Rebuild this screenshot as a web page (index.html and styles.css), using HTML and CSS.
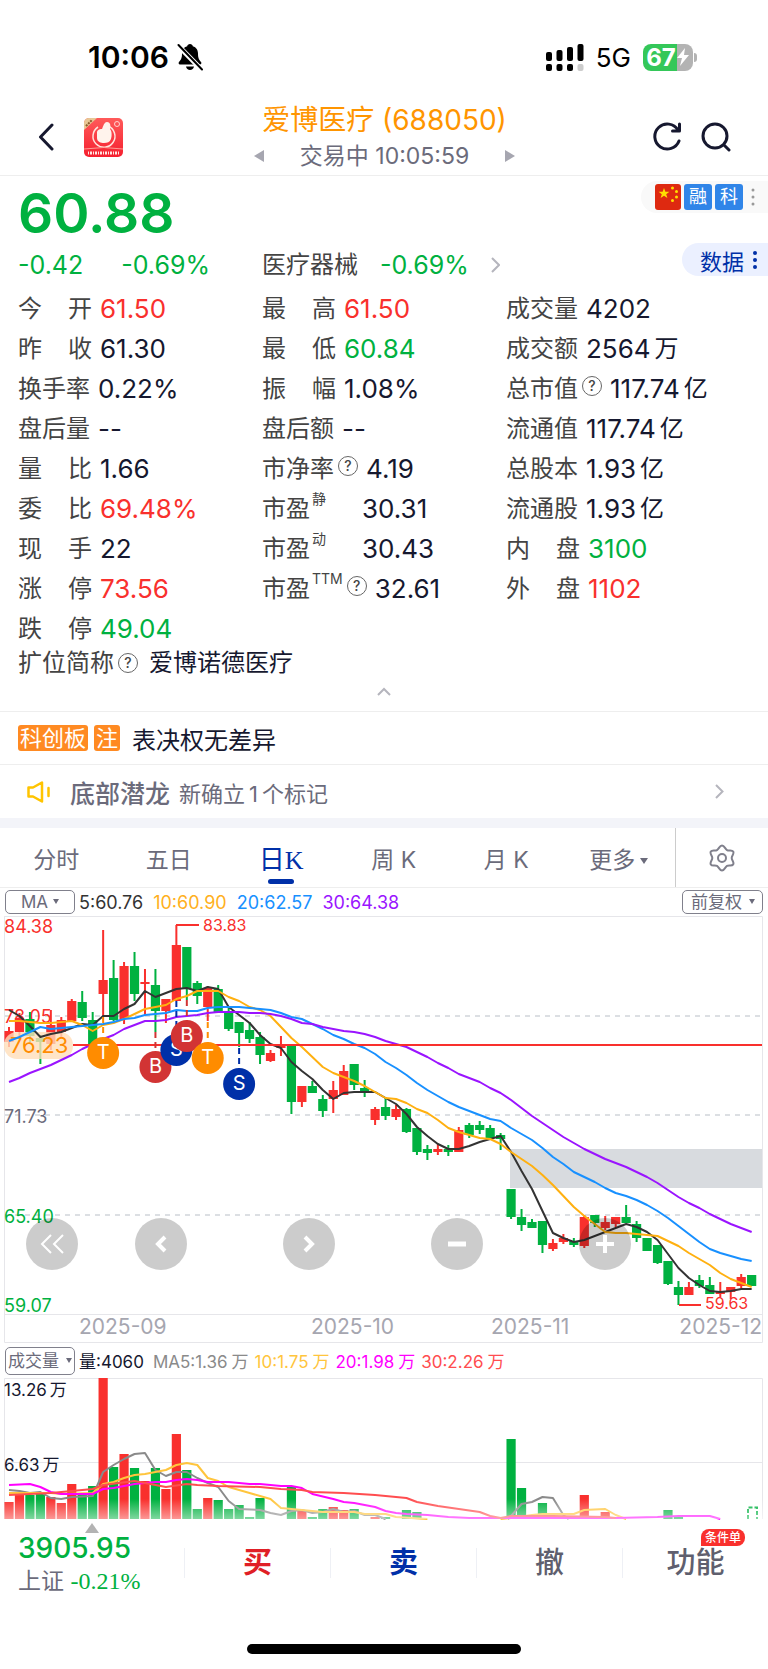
FILE: index.html
```
<!DOCTYPE html>
<html lang="zh-CN">
<head>
  <meta charset="UTF-8">
  <meta name="viewport" content="width=device-width, initial-scale=1.0">
  <title>爱博医疗 (688050)</title>
  <link rel="stylesheet" href="styles.css">
</head>
<body>
  <div class="status-bar">
    <div class="status-left">
      <span class="clock">10:06</span>
      <svg width="26" height="28" viewBox="0 0 26 28">
        <path d="M13 1c1.600 0 2.600 1 2.800 2.200 3.600 1 5.200 4 5.200 7.300 0 5 1.300 6.500 3 8.600.8 1 .4 2.400-1 2.400H3c-1.400 0-1.800-1.400-1-2.400 1.700-2.100 3-3.600 3-8.600 0-3.300 1.600-6.300 5.200-7.300C10.400 2 11.400 1 13 1z"/>
        <path d="M9 23.500h8c-.3 2-2 3.500-4 3.500s-3.700-1.500-4-3.500z"/>
        <path d="M0 1.500L25 27" stroke="#fff" stroke-width="5"/>
        <path d="M1.500 2L25 26.500" stroke="#000" stroke-width="2" stroke-linecap="round"/>
      </svg>
    </div>
    <div class="status-right">
      <svg width="38" height="28" viewBox="0 0 38 28">
        <rect x="0" y="9" width="6" height="9" rx="2"/>
        <rect x="10.500" y="7" width="6" height="11" rx="2"/>
        <rect x="21" y="4" width="6" height="14" rx="2"/>
        <rect x="31.500" y="1" width="6" height="17" rx="2"/>
        <rect x="0" y="21" width="6" height="7" rx="2"/>
        <rect x="10.500" y="21" width="6" height="7" rx="2"/>
        <rect x="21" y="21" width="6" height="7" rx="2"/>
        <rect x="31.500" y="21" width="6" height="7" rx="2" fill="#ccc"/>
      </svg>
      <span class="network">5G</span>
      <div class="battery">
        <span>67</span>
        <svg width="14" height="20" viewBox="0 0 14 20"><path d="M9 1L1 11h5l-2 8 9-11H8z" fill="#fff"/></svg>
      </div>
    </div>
  </div>

  <header class="header">
    <div class="header-side">
      <button type="button" class="icon-btn back-btn" aria-label="返回">
        <svg width="16" height="28" viewBox="0 0 16 28"><path d="M14 2L2.500 14 14 26" fill="none" stroke="#16182f" stroke-width="3" stroke-linecap="round" stroke-linejoin="round"/></svg>
      </button>
      <svg width="39" height="39" viewBox="0 0 39 39">
        <defs>
          <clipPath id="app-clip"><rect width="39" height="39" rx="5"/></clipPath>
          <linearGradient id="app-bg" x1="0" y1="0" x2="0" y2="1"><stop offset="0" stop-color="#ff5a5a"/><stop offset="1" stop-color="#f5202f"/></linearGradient>
        </defs>
        <g clip-path="url(#app-clip)">
          <rect width="39" height="39" fill="url(#app-bg)"/>
          <path d="M0 0h13L0 12z" fill="#e8c795"/>
          <path d="M2 8l6-6" stroke="#8c5a2b" stroke-width="2" stroke-dasharray="2 1"/>
          <path d="M24 8a11 11 0 1 1-10 1" fill="none" stroke="#ffe3dc" stroke-width="1.500"/>
          <path d="M13 15c0-3 2-4 5-4 1-2 2-7 5-7s4 3 3 7c2 2 2 7 1 10s-4 4-7 4-7-1-7-5z" fill="#fff3ec"/>
          <circle cx="33" cy="6" r="2.500" fill="none" stroke="#ffd3cf"/>
          <path d="M0 31q20-3 39 0" fill="none" stroke="#ff9c93"/>
          <path d="M4 35h31" stroke="#ffe6e2" stroke-width="3" stroke-dasharray="1 1 2 1"/>
        </g>
      </svg>
    </div>
    <div class="header-title">
      <h1>爱博医疗 (688050)</h1>
      <div class="header-sub">
        <button type="button" class="icon-btn" aria-label="上一只"><svg width="10" height="12" viewBox="0 0 10 12"><path d="M10 0v12L0 6z" fill="#a6a6b0"/></svg></button>
        <span>交易中 10:05:59</span>
        <button type="button" class="icon-btn" aria-label="下一只"><svg width="10" height="12" viewBox="0 0 10 12"><path d="M0 0v12l10-6z" fill="#a6a6b0"/></svg></button>
      </div>
    </div>
    <div class="header-side header-actions">
      <button type="button" class="icon-btn" aria-label="刷新">
        <svg width="30" height="30" viewBox="0 0 30 30" fill="none" stroke="#16182f" stroke-width="3" stroke-linecap="round" stroke-linejoin="round"><path d="M27 19a12.500 12.500 0 1 1-1-11M27.500 2v7h-7"/></svg>
      </button>
      <button type="button" class="icon-btn" aria-label="搜索">
        <svg width="30" height="30" viewBox="0 0 30 30" fill="none" stroke="#16182f" stroke-width="3" stroke-linecap="round"><circle cx="14" cy="14" r="12"/><path d="M23 23l5 5"/></svg>
      </button>
    </div>
  </header>

  <section class="quote">
    <div class="quote-top">
      <div class="price down">60.88</div>
      <div class="badges">
        <svg width="26" height="26" viewBox="0 0 26 26">
          <rect width="26" height="26" rx="3" fill="#de2910"/>
          <g fill="#ffde00">
            <path d="M9 4l1.400 3.800h4l-3.200 2.400 1.200 3.900L9 11.700l-3.400 2.400 1.200-3.900-3.200-2.400h4z"/>
            <circle cx="17.500" cy="4" r="1.500"/><circle cx="21.500" cy="7.500" r="1.500"/><circle cx="21.500" cy="13" r="1.500"/><circle cx="17.500" cy="16.500" r="1.500"/>
          </g>
        </svg>
        <span class="badge">融</span>
        <span class="badge">科</span>
        <svg class="badge-dots" width="4" height="18" viewBox="0 0 4 18" fill="#999"><circle cx="2" cy="2" r="1.500"/><circle cx="2" cy="9" r="1.500"/><circle cx="2" cy="16" r="1.500"/></svg>
      </div>
    </div>
    <div class="quote-change">
      <div class="change down"><span>-0.42</span><span>-0.69%</span></div>
      <a href="#industry" class="industry">
        <span>医疗器械</span><span class="down">-0.69%</span>
        <svg width="9" height="16" viewBox="0 0 9 16"><path d="M1 1l7 7-7 7" fill="none" stroke="#b5b5bd" stroke-width="2"/></svg>
      </a>
      <button type="button" class="data-btn">数据
        <svg width="4" height="18" viewBox="0 0 4 18" fill="#0030a8"><circle cx="2" cy="2" r="2"/><circle cx="2" cy="9" r="2"/><circle cx="2" cy="16" r="2"/></svg>
      </button>
    </div>

    <dl class="stats">
      <div><dt>今<i></i>开</dt><dd class="up">61.50</dd></div>
      <div><dt>最<i></i>高</dt><dd class="up">61.50</dd></div>
      <div><dt>成交量</dt><dd>4202</dd></div>
      <div><dt>昨<i></i>收</dt><dd>61.30</dd></div>
      <div><dt>最<i></i>低</dt><dd class="down">60.84</dd></div>
      <div><dt>成交额</dt><dd>2564<small>万</small></dd></div>
      <div><dt>换手率</dt><dd>0.22%</dd></div>
      <div><dt>振<i></i>幅</dt><dd>1.08%</dd></div>
      <div><dt>总市值<b class="help">?</b></dt><dd>117.74<small>亿</small></dd></div>
      <div><dt>盘后量</dt><dd>--</dd></div>
      <div><dt>盘后额</dt><dd>--</dd></div>
      <div><dt>流通值</dt><dd>117.74<small>亿</small></dd></div>
      <div><dt>量<i></i>比</dt><dd>1.66</dd></div>
      <div><dt>市净率<b class="help">?</b></dt><dd>4.19</dd></div>
      <div><dt>总股本</dt><dd>1.93<small>亿</small></dd></div>
      <div><dt>委<i></i>比</dt><dd class="up">69.48%</dd></div>
      <div><dt class="pe">市盈<sup>静</sup></dt><dd>30.31</dd></div>
      <div><dt>流通股</dt><dd>1.93<small>亿</small></dd></div>
      <div><dt>现<i></i>手</dt><dd>22</dd></div>
      <div><dt class="pe">市盈<sup>动</sup></dt><dd>30.43</dd></div>
      <div><dt>内<i></i>盘</dt><dd class="down">3100</dd></div>
      <div><dt>涨<i></i>停</dt><dd class="up">73.56</dd></div>
      <div><dt>市盈<sup>TTM</sup><b class="help">?</b></dt><dd>32.61</dd></div>
      <div><dt>外<i></i>盘</dt><dd class="up">1102</dd></div>
      <div><dt>跌<i></i>停</dt><dd class="down">49.04</dd></div>
    </dl>
    <div class="full-name"><span>扩位简称<b class="help">?</b></span><span class="full-name-value">爱博诺德医疗</span></div>
    <button type="button" class="icon-btn collapse-btn" aria-label="收起">
      <svg width="14" height="9" viewBox="0 0 14 9"><path d="M1 8l6-6 6 6" fill="none" stroke="#b5b5bd" stroke-width="2"/></svg>
    </button>
  </section>

  <div class="notice">
    <span class="tag">科创板</span><span class="tag">注</span>
    <span class="notice-text">表决权无差异</span>
  </div>
  <a href="#signals" class="signal">
    <svg width="24" height="22" viewBox="0 0 24 22" fill="none" stroke="#ffc400" stroke-width="2.500" stroke-linejoin="round" stroke-linecap="round"><path d="M1.500 6.500h4.500L15 1.500v19l-9-5H1.500zM21.500 7v8"/></svg>
    <strong>底部潜龙</strong>
    <span>新确立<span class="count">1</span>个标记</span>
    <svg class="signal-arrow" width="9" height="15" viewBox="0 0 9 15"><path d="M1 1l6.500 6.500L1 14" fill="none" stroke="#b5b5bd" stroke-width="2"/></svg>
  </a>

  <nav class="tabs">
    <button type="button">分时</button>
    <button type="button">五日</button>
    <button type="button" class="active">日K</button>
    <button type="button">周 K</button>
    <button type="button">月 K</button>
    <button type="button">更多<span class="caret"></span></button>
    <button type="button" class="settings" aria-label="设置">
      <svg width="26" height="28" viewBox="0 0 26 28" fill="none" stroke="#80808c" stroke-width="2" stroke-linejoin="round"><path d="M13 1.500c2.500 0 3 3.500 5 4.600s5-.6 6.200 1.500-1.500 4.100-1.500 6.400 2.800 4.300 1.500 6.400-4.200.4-6.200 1.500-2.500 4.600-5 4.600-3-3.500-5-4.600-5 .6-6.200-1.500S3.300 16.300 3.300 14 .6 9.700 1.800 7.600 6 7.200 8 6.100s2.500-4.600 5-4.600z"/><circle cx="13" cy="14" r="4"/></svg>
    </button>
  </nav>

  <div class="toolbar">
    <label class="picker picker-ma"><select aria-label="主图指标"><option>MA</option></select></label>
    <div class="legend">
      <span class="ma5">5:60.76</span><span class="ma10">10:60.90</span><span class="ma20">20:62.57</span><span class="ma30">30:64.38</span>
    </div>
    <label class="picker picker-wide"><select aria-label="复权方式"><option>前复权</option></select></label>
  </div>

  <div class="chart">
    <svg id="kline" viewBox="0 0 768 427">
      <path class="frame" d="M4 .5h758.500v426H4.500V0M4 398.500h758"/>
      <path class="grid" d="M5 100h757M5 199h757M5 299h757"/>
      <rect class="gap-zone" x="510" y="233" width="252" height="39"/>
      <g class="axis">
        <text class="up" x="4" y="17">84.38</text>
        <text class="up" x="4" y="107">78.05</text>
        <text x="4" y="207">71.73</text>
        <text class="down" x="4" y="307">65.40</text>
        <text class="down" x="4" y="396">59.07</text>
      </g>
      <g class="dates">
        <text x="79" y="418">2025-09</text>
        <text x="311" y="418">2025-10</text>
        <text x="491" y="418">2025-11</text>
        <text x="762" y="418" text-anchor="end">2025-12</text>
      </g>
      <g id="candles"></g>
      <rect class="cost-pill" x="4" y="116" width="69" height="27" rx="13"/>
      <text class="cost-text" x="10" y="137">76.23</text>
      <g id="ma-lines"></g>
      <path class="cost-line" d="M73 129h689"/>
      <path class="mark-line" d="M176 9h23M679 389h22"/>
      <g class="marks"><text x="203" y="15">83.83</text><text x="705" y="393">59.63</text></g>
      <g id="trades"></g>
    </svg>
    <div class="chart-controls">
      <button type="button" class="first" aria-label="最左"><svg width="24" height="20" viewBox="0 0 24 20"><path d="M11 1L2 10l9 9M23 1l-9 9 9 9" stroke-width="2"/></svg></button>
      <button type="button" aria-label="左移"><svg width="12" height="18" viewBox="0 0 12 18"><path d="M10 2L3 9l7 7" stroke-width="4"/></svg></button>
      <button type="button" aria-label="右移"><svg width="12" height="18" viewBox="0 0 12 18"><path d="M2 2l7 7-7 7" stroke-width="4"/></svg></button>
      <button type="button" aria-label="缩小"><svg width="18" height="18" viewBox="0 0 18 18"><path d="M0 9h18" stroke-width="5"/></svg></button>
      <button type="button" aria-label="放大"><svg width="18" height="18" viewBox="0 0 18 18"><path d="M0 9h18M9 0v18" stroke-width="4"/></svg></button>
    </div>
  </div>

  <div class="toolbar toolbar-volume">
    <label class="picker"><select aria-label="副图指标"><option>成交量</option></select></label>
    <div class="legend legend-volume">
      <span class="vol">量:4060</span><span class="v5">MA5:1.36<i>万</i></span><span class="v10">10:1.75<i>万</i></span><span class="v20">20:1.98<i>万</i></span><span class="v30">30:2.26<i>万</i></span>
    </div>
  </div>
  <div class="chart">
    <svg id="volume" viewBox="0 0 768 141">
      <defs>
        <linearGradient id="fade" x1="0" y1="0" x2="0" y2="1">
          <stop offset="0" stop-color="#fff" stop-opacity="0"/>
          <stop offset="1" stop-color="#fff" stop-opacity=".5"/>
        </linearGradient>
      </defs>
      <path class="frame" d="M4.500 141V.5h758V141M5 84.500h757"/>
      <g id="bars"></g>
      <g id="vol-lines"></g>
      <g class="axis vol-axis"><text x="4" y="18">13.26<tspan dx="3">万</tspan></text><text x="4" y="93">6.63<tspan dx="3">万</tspan></text></g>
      <rect x="0" y="121" width="768" height="20" fill="url(#fade)"/>
    </svg>
  </div>

  <footer class="bottom-bar">
    <a href="#index" class="index">
      <svg class="index-arrow" width="14" height="10" viewBox="0 0 14 10"><path d="M7 0l7 10H0z" fill="#b3b3b3"/></svg>
      <div class="index-value down">3905.95</div>
      <div class="index-name">上证 <span class="down">-0.21%</span></div>
    </a>
    <button type="button" class="buy">买</button>
    <button type="button" class="sell">卖</button>
    <button type="button">撤</button>
    <button type="button">功能<span class="new-tag">条件单</span></button>
  </footer>
  <div class="home-indicator"></div>
  <script src="chart.js"></script>
</body>
</html>
```
FILE: styles.css
```
* {
  box-sizing: border-box;
}
body {
  margin: 0;
  background: #fff;
  color: #16182f;
  font-family: Inter, "Noto Sans CJK SC", sans-serif;
  font-size: 24px;
}
button {
  font-family: inherit;
  background: none;
  border: 0;
  padding: 0;
  margin: 0;
  cursor: pointer;
}
a {
  color: inherit;
  text-decoration: none;
}
svg {
  display: block;
  flex: none;
}
.icon-btn {
  display: block;
}
.up {
  color: #f9302d;
  fill: #f9302d;
}
.down {
  color: #00b140;
  fill: #00b140;
}

/* status bar */
.status-bar {
  display: flex;
  justify-content: space-between;
  align-items: center;
  height: 46px;
  margin-top: 34px;
  padding: 0 70px 0 88px;
  color: #000;
}
.status-left,
.status-right {
  display: flex;
  align-items: center;
}
.status-left {
  gap: 8px;
}
.clock {
  font-size: 30px;
  font-weight: 600;
}
.network {
  margin: 0 12px;
  font-size: 26px;
}
.battery {
  position: relative;
  display: flex;
  align-items: center;
  justify-content: center;
  width: 50px;
  height: 27px;
  margin-right: 5px;
  border-radius: 8px;
  background: linear-gradient(90deg, #34c759 67%, #b3b3b3 67%);
  color: #fff;
  font-size: 24px;
  font-weight: 700;
  line-height: 27px;
}
.battery::after {
  content: "";
  position: absolute;
  left: 51px;
  top: 9px;
  width: 3px;
  height: 9px;
  border-radius: 0 3px 3px 0;
  background: #b3b3b3;
}

/* header */
.header {
  display: flex;
  align-items: center;
  justify-content: space-between;
  height: 77px;
  margin-top: 19px;
  padding: 0 37px 0 38px;
  border-bottom: 1px solid #eee;
}
.header-side {
  display: flex;
  align-items: center;
  gap: 30px;
  flex: 1;
}
.header-actions {
  justify-content: flex-end;
  gap: 19px;
}
.header-title {
  text-align: center;
}
.header h1 {
  margin: 0;
  color: #ff9500;
  font-size: 28px;
  font-weight: 400;
  line-height: 38px;
}
.header-sub {
  display: flex;
  align-items: center;
  justify-content: center;
  gap: 36px;
  color: #6b6b7b;
  font-size: 23px;
  line-height: 34px;
}

/* quote */
.quote-top {
  display: flex;
  align-items: flex-start;
  justify-content: space-between;
  padding-left: 18px;
}
.price {
  padding-top: 7px;
  font-size: 55px;
  font-weight: 600;
  line-height: 60px;
}
.badges {
  display: flex;
  align-items: center;
  gap: 3px;
  height: 32px;
  margin-top: 5px;
  padding: 0 13px 0 14px;
  border-radius: 16px 0 0 16px;
  background: #f9f9f9;
}
.badge {
  width: 28px;
  height: 26px;
  border-radius: 3px;
  background: #3085e8;
  color: #fff;
  font-size: 18px;
  line-height: 26px;
  text-align: center;
}
.badge-dots {
  margin-left: 5px;
}
.quote-change {
  display: flex;
  height: 44px;
  padding-left: 18px;
  font-size: 25px;
  line-height: 44px;
}
.change {
  display: flex;
  gap: 38px;
  width: calc((100% - 18px) / 3);
}
.industry {
  display: flex;
  align-items: center;
  gap: 22px;
}
.industry span:first-child {
  color: #444;
  font-size: 24px;
}
.data-btn {
  display: flex;
  align-items: center;
  gap: 9px;
  height: 33px;
  margin-left: auto;
  padding: 0 11px 0 18px;
  border-radius: 17px 0 0 17px;
  background: #ebf0ff;
  color: #0030a8;
  font-size: 22px;
}
.stats {
  display: grid;
  grid-template-columns: repeat(3, 1fr);
  margin: 0;
  padding: 0 18px;
}
.stats div {
  display: flex;
  align-items: center;
  gap: 8px;
  height: 40px;
  white-space: nowrap;
}
.stats dt {
  display: flex;
  align-items: center;
  padding-bottom: 2px;
  color: #444;
}
.stats i {
  width: 26px;
}
.stats dd {
  display: flex;
  align-items: center;
  gap: 4px;
  margin: 0;
  padding-top: 2px;
  font-size: 26px;
}
.stats small {
  padding-bottom: 4px;
  font-size: 24px;
}
.stats sup {
  align-self: flex-start;
  margin-left: 2px;
  font-size: 14px;
  line-height: 20px;
}
.stats .pe {
  width: 92px;
}
.help {
  width: 20px;
  height: 20px;
  margin-left: 4px;
  border: 1px solid #666;
  border-radius: 50%;
  color: #444;
  font-size: 14px;
  font-weight: 500;
  line-height: 18px;
  text-align: center;
}
.full-name {
  display: flex;
  gap: 11px;
  height: 32px;
  padding-left: 18px;
  color: #444;
  line-height: 32px;
}
.full-name span {
  display: flex;
  align-items: center;
}
.full-name .full-name-value {
  color: #16182f;
}
.collapse-btn {
  width: 100%;
  height: 32px;
  padding-bottom: 8px;
}
.collapse-btn svg {
  margin: 0 auto;
}

/* notices */
.notice {
  display: flex;
  align-items: center;
  gap: 6px;
  height: 54px;
  padding-left: 18px;
  border-top: 1px solid #eee;
  border-bottom: 1px solid #eee;
}
.tag {
  height: 26px;
  padding: 0 2px;
  border-radius: 3px;
  background: #ff8a22;
  color: #fff;
  font-size: 22px;
  line-height: 26px;
}
.notice-text {
  margin-left: 6px;
}
.signal {
  display: flex;
  align-items: center;
  height: 63px;
  padding: 0 44px 0 27px;
  border-bottom: 10px solid #f3f4f9;
  color: #6b6b7b;
  font-size: 22px;
}
.signal strong {
  margin: 0 9px 0 19px;
  font-size: 25px;
  font-weight: 500;
}
.count {
  margin: 0 4px;
}
.signal-arrow {
  margin-left: auto;
}

/* period tabs */
.tabs {
  display: flex;
  height: 60px;
  border-bottom: 1px solid #eee;
}
.tabs button {
  position: relative;
  flex: 1;
  color: #6b6b7b;
  font-size: 23px;
  white-space: nowrap;
}
.tabs .active {
  color: #0030a8;
  font-family: "Liberation Serif", "Noto Sans CJK SC", serif;
  font-size: 26px;
}
.tabs .active::after {
  content: "";
  position: absolute;
  left: calc(50% - 13px);
  bottom: 3px;
  width: 26px;
  height: 5px;
  border-radius: 3px;
  background: #0030a8;
}
.tabs .settings {
  display: flex;
  align-items: center;
  justify-content: center;
  flex: 0 0 93px;
  border-left: 1px solid #ccc;
}
.caret {
  display: inline-block;
  margin-left: 5px;
  vertical-align: middle;
  border: 4px solid transparent;
  border-top: 6px solid #6b6b7b;
  border-bottom: 0;
}

/* indicator rows */
.toolbar {
  display: flex;
  align-items: center;
  height: 28px;
  padding: 0 5px;
}
.toolbar-volume {
  height: 35px;
}
.picker {
  position: relative;
  width: 70px;
  height: 24px;
}
.picker::after {
  content: "";
  position: absolute;
  right: 3px;
  top: calc(50% - 3px);
  border: 3px solid transparent;
  border-top: 5px solid #6b6b7b;
  border-bottom: 0;
  pointer-events: none;
}
.picker select {
  display: block;
  width: 100%;
  height: 100%;
  padding: 0 0 0 2px;
  appearance: none;
  border: 1px solid #80808c;
  border-radius: 5px;
  background: #fff;
  color: #6b6b7b;
  font-family: inherit;
  font-size: 17px;
}
.toolbar-volume .picker {
  height: 28px;
}
.picker-ma::after {
  right: 16px;
}
.picker-ma select {
  padding-left: 15px;
}
.picker-wide {
  width: 81px;
  margin-left: auto;
}
.picker-wide::after {
  right: 8px;
}
.picker-wide select {
  padding-left: 8px;
}
.legend {
  display: flex;
  gap: 10px;
  margin-left: 4px;
  font-size: 18px;
  white-space: nowrap;
}
.legend-volume {
  gap: 6px;
  font-size: 17px;
}
.legend i {
  margin-left: 4px;
  font-style: normal;
}
.ma5 { color: #333; }
.ma10 { color: #ffb020; }
.ma20 { color: #1890ff; }
.ma30 { color: #9a14ff; }
.vol { margin-right: 3px; }
.v5 { color: #8a8a8a; }
.v10 { color: #ffc53d; }
.v20 { color: #ff00ff; }
.v30 { color: #ff4d4f; }

/* charts */
.chart {
  position: relative;
}
.chart > svg {
  width: 100%;
  height: auto;
  overflow: visible;
}
.frame {
  fill: none;
  stroke: #e6e6ea;
}
.grid {
  stroke: #dcdfe3;
  stroke-width: 2;
  stroke-dasharray: 5 5;
}
.gap-zone {
  fill: #d8dbdf;
}
.axis {
  fill: #6b6b7b;
  font-size: 18px;
}
.vol-axis {
  fill: #16182f;
  font-size: 17px;
}
.dates {
  fill: #a6a6b0;
  font-size: 21px;
}
.marks {
  fill: #f9302d;
  font-size: 16px;
}
.mark-line,
.cost-line {
  fill: none;
  stroke: #f9302d;
  stroke-width: 2;
}
.cost-pill {
  fill: #ffdfba;
  fill-opacity: .8;
}
.cost-text {
  fill: #ff8c00;
  font-size: 22px;
}
.line {
  fill: none;
  stroke-width: 2;
  stroke-linejoin: round;
}
.trade {
  fill: #fff;
  font-size: 20px;
  text-anchor: middle;
}
.chart-controls {
  position: absolute;
  top: 302px;
  left: 26px;
  display: flex;
  gap: 96px;
}
.chart-controls button {
  display: flex;
  align-items: center;
  justify-content: center;
  width: 52px;
  height: 52px;
  border-radius: 50%;
  background: rgba(0, 0, 0, .2);
}
.chart-controls .first {
  margin-right: -39px;
}
.chart-controls path {
  fill: none;
  stroke: #fff;
}

/* bottom bar */
.bottom-bar {
  display: flex;
  align-items: center;
  height: 88px;
}
.bottom-bar button {
  position: relative;
  flex: 1;
  height: 30px;
  border-left: 1px solid #eef0f5;
  color: #5f5f6e;
  font-size: 29px;
  font-weight: 500;
  line-height: 30px;
}
.bottom-bar .buy {
  color: #e01f26;
  font-weight: 700;
}
.bottom-bar .sell {
  color: #0030a8;
  font-weight: 700;
}
.index {
  position: relative;
  width: 184px;
  padding: 2px 0 0 18px;
}
.index-arrow {
  position: absolute;
  left: 85px;
  top: -6px;
}
.index-value {
  font-size: 28px;
  font-weight: 500;
  line-height: 34px;
}
.index-name {
  color: #6b6b7b;
  font-size: 23px;
  line-height: 32px;
}
.index-name span {
  font-family: "Liberation Serif", serif;
  font-size: 24px;
}
.new-tag {
  position: absolute;
  right: 23px;
  top: -19px;
  width: 44px;
  border-radius: 8px 8px 8px 0;
  background: #f9302d;
  color: #fff;
  font-size: 12px;
  line-height: 17px;
}
.home-indicator {
  width: 274px;
  height: 10px;
  margin: 37px auto 14px;
  border-radius: 5px;
  background: #000;
}
```
FILE: chart.js
```
const RED = '#f9302d';
const GREEN = '#00b140';
const STEP = 10.46;
const X0 = 9;

const x = i => X0 + i * STEP;

// color, body top, body bottom, high, low
const candles = [
  ['r', 115, 126, 111, 131], ['r', 102, 116, 97, 121], ['g', 103, 120, 96, 126], ['g', 122, 126, 119, 148],
  ['r', 109, 128, 94, 134], ['r', 104, 116, 101, 121], ['r', 85, 105, 83, 105], ['g', 86, 102, 75, 105],
  ['g', 104, 129, 96, 129], ['r', 64, 78, 14, 101], ['g', 62, 104, 44, 105], ['r', 50, 103, 46, 108],
  ['g', 50, 78, 36, 85], ['r', 66, 67, 53, 99], ['g', 69, 95, 53, 116], ['r', 83, 95, 83, 107],
  ['r', 29, 85, 9, 85], ['g', 31, 73, 31, 84], ['g', 67, 80, 65, 88], ['r', 72, 91, 70, 105],
  ['g', 73, 97, 69, 97], ['g', 96, 113, 91, 115], ['g', 106, 117, 106, 131], ['g', 114, 123, 106, 127],
  ['g', 121, 139, 116, 148], ['r', 137, 145, 134, 146], ['r', 128, 132, 120, 140], ['g', 128, 186, 128, 198],
  ['r', 170, 186, 170, 191], ['g', 170, 177, 165, 177], ['g', 183, 195, 179, 201], ['r', 174, 183, 165, 197],
  ['r', 155, 179, 149, 179], ['g', 148, 169, 148, 174], ['g', 172, 177, 164, 181], ['r', 193, 204, 191, 209],
  ['g', 191, 200, 181, 204], ['r', 193, 201, 189, 204], ['g', 193, 216, 192, 217], ['g', 212, 236, 212, 239],
  ['g', 233, 237, 229, 244], ['r', 233, 236, 228, 239], ['g', 233, 236, 229, 240], ['r', 214, 236, 211, 236],
  ['g', 209, 219, 207, 222], ['g', 209, 214, 205, 218], ['g', 212, 222, 209, 224], ['g', 219, 223, 217, 234],
  ['g', 273, 301, 273, 303], ['g', 301, 309, 293, 315], ['g', 306, 312, 303, 312], ['g', 305, 329, 305, 337],
  ['r', 327, 333, 323, 335], ['r', 322, 326, 318, 328], ['g', 325, 329, 322, 331], ['r', 301, 330, 299, 332],
  ['g', 299, 307, 299, 311], ['r', 306, 312, 300, 314], ['r', 301, 308, 301, 311], ['g', 301, 307, 289, 307],
  ['g', 308, 322, 305, 326], ['g', 322, 335, 322, 335], ['g', 329, 347, 329, 348], ['g', 345, 368, 345, 369],
  ['g', 371, 379, 365, 389], ['r', 371, 379, 366, 379], ['g', 364, 370, 359, 372], ['g', 369, 378, 361, 378],
  ['r', 375, 378, 366, 381], ['r', 371, 376, 371, 383], ['r', 361, 370, 358, 372], ['g', 359, 370, 359, 370]
];

const averages = {
  '#333333': [94, 100, 110, 121, 118, 116, 112, 108, 109, 100, 100, 93, 88, 75, 81, 77, 73, 72, 75, 71, 73, 91, 99, 107, 119, 128, 132, 146, 155, 163, 174, 183, 177, 176, 176, 176, 182, 188, 198, 211, 220, 228, 233, 233, 230, 226, 223, 220, 236, 255, 273, 295, 317, 322, 326, 324, 320, 316, 312, 308, 311, 316, 324, 338, 352, 362, 369, 375, 376, 375, 373, 373],
  '#ffb010': [105, 105, 106, 107, 107, 106, 105, 109, 115, 109, 107, 103, 98, 93, 91, 89, 83, 80, 75, 75, 75, 81, 85, 91, 94, 100, 111, 122, 131, 141, 151, 157, 161, 165, 170, 176, 182, 183, 187, 193, 197, 204, 212, 216, 219, 222, 223, 228, 236, 243, 250, 259, 269, 280, 291, 300, 308, 316, 317, 317, 318, 319, 320, 325, 330, 337, 343, 349, 357, 363, 367, 371],
  '#1890ff': [125, 121, 116, 111, 113, 112, 111, 110, 109, 108, 106, 103, 102, 99, 98, 97, 94, 95, 95, 92, 91, 91, 91, 92, 93, 94, 97, 101, 103, 108, 113, 119, 123, 128, 132, 138, 146, 152, 159, 167, 174, 180, 186, 191, 195, 199, 203, 205, 212, 218, 224, 232, 241, 248, 256, 261, 266, 272, 277, 280, 284, 289, 295, 302, 310, 318, 326, 333, 337, 340, 343, 345],
  '#9a14ff': [166, 162, 157, 153, 149, 144, 139, 133, 128, 123, 119, 113, 109, 105, 105, 104, 101, 100, 99, 97, 96, 96, 96, 97, 97, 98, 100, 103, 107, 108, 111, 113, 115, 116, 118, 121, 125, 128, 131, 136, 141, 147, 152, 158, 162, 166, 172, 177, 184, 192, 200, 207, 214, 221, 227, 233, 238, 243, 247, 251, 256, 261, 267, 274, 281, 287, 292, 298, 303, 308, 312, 316]
};

// candle index, letter, marker y, dash start y, color
const trades = [
  [9, 'T', 137, 101, '#ff8c00'], [14, 'B', 151, 116, '#d23434'], [16, 'S', 134, 85, '#0030a8'],
  [17, 'B', 120, 84, '#d23434'], [19, 'T', 142, 106, '#ff8c00'], [22, 'S', 168, 132, '#0030a8']
];

// tops of the volume bars, 141 is the baseline
const volumes = [
  124, 116, 117, 115, 119, 125, 106, 115, 108, 0, 89, 76, 90, 103, 90, 111, 56, 92, 131, 120, 122, 131, 127, 139,
  120, 141, 141, 108, 133, 139, 131, 129, 132, 131, 141, 139, 139, 141, 132, 134, 141, 141, 141, 141, 141, 141, 141, 141,
  61, 110, 141, 125, 141, 141, 141, 117, 141, 134, 141, 141, 141, 141, 141, 132, 139
];

// [index, y] points
const volumeAverages = [
  ['#8a8a8a', [[0, 112], [1, 113], [2, 115], [3, 114], [4, 120], [5, 121], [6, 119], [8, 118], [9, 94], [10, 87], [11, 81], [12, 76], [13, 75], [14, 92], [15, 98], [16, 94], [17, 94], [18, 100], [19, 105], [20, 109], [21, 123], [22, 131], [24, 132], [25, 135], [26, 137], [27, 133], [28, 132], [29, 135], [30, 134], [31, 131], [32, 134], [33, 133], [34, 137], [35, 137], [36, 141]]],
  ['#8a8a8a', [[47.7, 141], [48, 138], [49, 126], [50, 124], [51, 119], [52, 120], [53, 137], [53.5, 141]]],
  ['#ffc53d', [[0, 115], [4, 115], [5, 116], [8, 115], [9, 106], [10, 104], [11, 100], [12, 97], [13, 96], [14, 94], [15, 92], [16, 87], [17, 85], [18, 87], [19, 100], [20, 103], [21, 109], [22, 112], [23, 115], [24, 118], [25, 121], [26, 130], [28, 132], [30, 134], [33, 134], [34, 136], [36, 136], [37, 139], [40, 141]]],
  ['#ffc53d', [[47, 141], [48, 140], [50, 137], [51, 136], [54, 136], [55, 132], [57, 131], [58, 137], [59, 141]]],
  ['#ff00ff', [[0, 107], [2, 106], [3, 109], [4, 114], [5, 116], [8, 116], [9, 111], [10, 110], [12, 106], [14, 104], [15, 104], [16, 102], [17, 101], [18, 102], [19, 104], [21, 104], [23, 106], [24, 106], [26, 108], [27, 108], [28, 110], [29, 116], [31, 121], [32, 124], [33, 125], [34, 127], [35, 129], [36, 133], [37, 135], [38, 136], [40, 137], [42, 139], [44, 140], [58, 140], [62, 139], [64, 138], [67, 138], [68, 141]]],
  ['#ff4d4f', [[0, 117], [4, 115], [5, 114], [8, 111], [9, 107], [12, 103], [13, 105], [15, 109], [17, 106], [18, 107], [20, 108], [24, 109], [26, 111], [28, 112], [29, 114], [32, 115], [35, 117], [38, 120], [39, 124], [41, 128], [43, 131], [45, 134], [46, 138], [47, 140], [48, 138], [52, 138], [57, 139], [58, 140]]]
];

function add(parent, tag, attrs, text) {
  const el = document.createElementNS('http://www.w3.org/2000/svg', tag);
  for (const key in attrs) el.setAttribute(key, attrs[key]);
  if (text) el.textContent = text;
  parent.appendChild(el);
}

function drawLine(parent, color, points) {
  add(parent, 'polyline', { class: 'line', stroke: color, points: points.map(p => x(p[0]) + ',' + p[1]).join(' ') });
}

const candleGroup = document.getElementById('candles');
candles.forEach(([c, top, bottom, high, low], i) => {
  const color = c === 'r' ? RED : GREEN;
  add(candleGroup, 'rect', { x: x(i) - 1, y: high, width: 2, height: low - high, fill: color });
  add(candleGroup, 'rect', { x: x(i) - 4.6, y: top, width: 9.2, height: Math.max(bottom - top, 2), fill: color });
});

const maGroup = document.getElementById('ma-lines');
for (const color in averages) {
  drawLine(maGroup, color, averages[color].map((y, i) => [i, y]));
}

const tradeGroup = document.getElementById('trades');
trades.forEach(([i, letter, y, from, color]) => {
  add(tradeGroup, 'path', { d: `M${x(i)} ${from}V${y}`, stroke: color, 'stroke-width': 2, 'stroke-dasharray': '6 4' });
  add(tradeGroup, 'circle', { cx: x(i), cy: y, r: 16, fill: color });
  add(tradeGroup, 'text', { class: 'trade', x: x(i), y: y + 6 }, letter);
});

const barGroup = document.getElementById('bars');
volumes.forEach((top, i) => {
  add(barGroup, 'rect', { x: x(i) - 4.6, y: top, width: 9.2, height: 141 - top, fill: candles[i][0] === 'r' ? RED : GREEN });
});
// today's bar is still open
add(barGroup, 'path', { d: 'M748 141V129.500h9V141', fill: 'none', stroke: GREEN, 'stroke-width': 2, 'stroke-dasharray': '4 2' });

const volGroup = document.getElementById('vol-lines');
volumeAverages.forEach(([color, points]) => drawLine(volGroup, color, points));
```
